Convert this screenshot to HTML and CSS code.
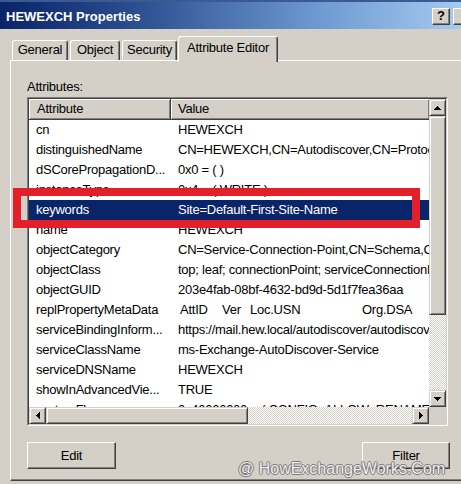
FILE: index.html
```html
<!DOCTYPE html>
<html>
<head>
<meta charset="utf-8">
<link rel="stylesheet" href="styles.css">
</head>
<body>
<div class="window">
  <div class="titlebar">
    <span class="title">HEWEXCH Properties</span>
    <div class="tb-buttons">
      <span class="tb-btn">?</span>
      <span class="tb-btn"></span>
    </div>
  </div>
  <div class="main">
    <div class="tabs">
      <div class="tab w-general">General</div>
      <div class="tab w-object">Object</div>
      <div class="tab w-security">Security</div>
      <div class="tab active w-attr">Attribute Editor</div>
    </div>
    <div class="panel">
      <div class="label">Attributes:</div>
      <div class="listbox">
        <div class="listbox-inner">
          <div class="list-main">
            <div class="header">
              <div class="hcell h-attr">Attribute</div>
              <div class="hcell h-val">Value</div>
            </div>
            <div class="row"><span class="c-attr">cn</span><span class="c-val">HEWEXCH</span></div>
            <div class="row"><span class="c-attr">distinguishedName</span><span class="c-val">CN=HEWEXCH,CN=Autodiscover,CN=Protocols,CN=HEWEXCH,CN=Servers</span></div>
            <div class="row"><span class="c-attr">dSCorePropagationD...</span><span class="c-val">0x0 = ( )</span></div>
            <div class="row"><span class="c-attr">instanceType</span><span class="c-val">0x4 = ( WRITE )</span></div>
            <div class="row selected"><span class="c-attr">keywords</span><span class="c-val">Site=Default-First-Site-Name</span></div>
            <div class="row"><span class="c-attr">name</span><span class="c-val">HEWEXCH</span></div>
            <div class="row"><span class="c-attr">objectCategory</span><span class="c-val">CN=Service-Connection-Point,CN=Schema,CN=Configuration</span></div>
            <div class="row"><span class="c-attr">objectClass</span><span class="c-val">top; leaf; connectionPoint; serviceConnectionPoint</span></div>
            <div class="row"><span class="c-attr">objectGUID</span><span class="c-val">203e4fab-08bf-4632-bd9d-5d1f7fea36aa</span></div>
            <div class="row"><span class="c-attr">replPropertyMetaData</span><span class="c-val meta"><span class="m1">AttID</span><span class="m2">Ver</span><span class="m3">Loc.USN</span><span>Org.DSA</span></span></div>
            <div class="row"><span class="c-attr">serviceBindingInform...</span><span class="c-val">https://mail.hew.local/autodiscover/autodiscover.xml</span></div>
            <div class="row"><span class="c-attr">serviceClassName</span><span class="c-val">ms-Exchange-AutoDiscover-Service</span></div>
            <div class="row"><span class="c-attr">serviceDNSName</span><span class="c-val">HEWEXCH</span></div>
            <div class="row"><span class="c-attr">showInAdvancedVie...</span><span class="c-val">TRUE</span></div>
            <div class="row"><span class="c-attr">systemFlags</span><span class="c-val">0x40000000 = ( CONFIG_ALLOW_RENAME )</span></div>
          </div>
          <div class="vscroll">
            <div class="sbtn"><svg width="7" height="4" viewBox="0 0 7 4"><path d="M3 0h1v1h1v1h1v1h1v1H0V3h1V2h1V1h1z"/></svg></div>
            <div class="vthumb"></div>
            <div class="track"></div>
            <div class="sbtn"><svg width="7" height="4" viewBox="0 0 7 4"><path d="M0 0h7v1H6v1H5v1H4v1H3V3H2V2H1V1H0z"/></svg></div>
          </div>
          <div class="hscroll">
            <div class="sbtn"><svg width="4" height="7" viewBox="0 0 4 7"><path d="M3 0h1v7H3V6H2V5H1V4H0V3h1V2h1V1h1z"/></svg></div>
            <div class="hthumb"></div>
            <div class="track"></div>
            <div class="sbtn"><svg width="4" height="7" viewBox="0 0 4 7"><path d="M0 0h1v1h1v1h1v1h1v1H3v1H2v1H1v1H0z"/></svg></div>
          </div>
          <div class="corner"></div>
        </div>
      </div>
      <div class="buttons">
        <div class="btn btn-edit">Edit</div>
        <div class="btn btn-filter">Filter</div>
      </div>
    </div>
  </div>
  <div class="redbox"></div>
  <div class="watermark">@ HowExchangeWorks.Com</div>
</div>
</body>
</html>
```
FILE: styles.css
```css
* { box-sizing: border-box; }
html, body { margin: 0; padding: 0; }
body {
  background: #d4d0c8;
  font-family: "Liberation Sans", Arial, sans-serif;
  font-size: 13px;
  letter-spacing: -0.25px;
  color: #000;
}
.window {
  position: relative;
  width: 461px;
  height: 484px;
  overflow: hidden;
  background: #d4d0c8;
  display: flex;
  flex-direction: column;
}
.titlebar {
  flex-shrink: 0;
  height: 29px;
  padding: 3px 0 0 6px;
  display: flex;
  align-items: center;
  justify-content: space-between;
  background: linear-gradient(to right, #0a246a 0%, #2c4f8f 30%, #6f9bd3 70%, #a6caf0 100%);
  box-shadow: inset 0 2px #3a5a92;
}
.title {
  color: #fff;
  font-weight: bold;
  font-size: 13px;
  letter-spacing: 0;
}
.tb-buttons {
  display: flex;
  gap: 3px;
  margin-right: -10px;
}
.tb-btn {
  width: 18px;
  height: 17px;
  background: #d4d0c8;
  border: 1px solid;
  border-color: #fff #404040 #404040 #fff;
  box-shadow: inset -1px -1px #808080;
  font-weight: bold;
  font-size: 13px;
  line-height: 14px;
  text-align: center;
  letter-spacing: 0;
}
.main {
  flex: 1;
  display: flex;
  flex-direction: column;
  padding: 7px 0 3px 10px;
}
.tabs {
  position: relative;
  z-index: 1;
  height: 24px;
  display: flex;
  align-items: flex-start;
  padding-left: 2px;
}
.tab {
  margin-top: 4px;
  height: 20px;
  margin-right: 2px;
  text-align: center;
  line-height: 18px;
  background: #d4d0c8;
  border-top: 1px solid #fff;
  border-left: 1px solid #fff;
  border-right: 1px solid #404040;
  box-shadow: inset -1px 0 #808080;
  border-radius: 3px 3px 0 0;
}
.tab.active {
  margin-top: 0;
  margin-left: -1px;
  height: 26px;
  line-height: 22px;
}
.w-general { width: 56px; }
.w-object { width: 50px; }
.w-security { width: 55px; }
.w-attr { width: 100px; }
.panel {
  flex: 1;
  border-top: 1px solid #fff;
  border-left: 1px solid #fff;
  border-bottom: 1px solid #404040;
  box-shadow: inset 0 -1px #808080;
  padding: 18px 0 0 16px;
}
.label {
  line-height: 15px;
  height: 15px;
}
.listbox {
  margin-top: 3px;
  width: 421px;
  height: 329px;
  border: 1px solid;
  border-color: #808080 #fff #fff #808080;
}
.listbox-inner {
  height: 100%;
  border: 1px solid;
  border-color: #404040 #d4d0c8 #d4d0c8 #404040;
  background: #fff;
  display: grid;
  grid-template-columns: 1fr 17px;
  grid-template-rows: 1fr 17px;
}
.list-main {
  overflow: hidden;
  min-width: 0;
  min-height: 0;
}
.header {
  display: flex;
  height: 21px;
}
.hcell {
  background: #d4d0c8;
  border-right: 1px solid #404040;
  border-bottom: 1px solid #404040;
  box-shadow: inset 1px 1px #fff, inset -1px -1px #808080;
  line-height: 19px;
}
.h-attr { width: 142px; flex-shrink: 0; padding-left: 8px; }
.h-val { flex: 1; padding-left: 7px; border-right: 0; }
.row {
  display: flex;
  height: 20px;
  line-height: 20px;
  white-space: nowrap;
}
.row.selected {
  background: #0a246a;
  color: #fff;
}
.c-attr {
  width: 142px;
  flex-shrink: 0;
  padding-left: 7px;
}
.c-val { padding-left: 7px; }
.meta { padding-left: 9px; display: flex; }
.m1 { width: 42px; }
.m2 { width: 28px; }
.m3 { width: 112px; }
.sbtn {
  width: 17px;
  height: 17px;
  flex-shrink: 0;
  background: #d4d0c8;
  border: 1px solid;
  border-color: #d4d0c8 #404040 #404040 #d4d0c8;
  box-shadow: inset 1px 1px #fff, inset -1px -1px #808080;
  display: flex;
  align-items: center;
  justify-content: center;
}
.sbtn svg { display: block; fill: #000; }
.vscroll {
  display: flex;
  flex-direction: column;
}
.hscroll {
  display: flex;
}
.vthumb {
  height: 199px;
  flex-shrink: 0;
  background: #d4d0c8;
  border: 1px solid;
  border-color: #d4d0c8 #404040 #404040 #d4d0c8;
  box-shadow: inset 1px 1px #fff, inset -1px -1px #808080;
}
.hthumb {
  width: 202px;
  flex-shrink: 0;
  background: #d4d0c8;
  border: 1px solid;
  border-color: #d4d0c8 #404040 #404040 #d4d0c8;
  box-shadow: inset 1px 1px #fff, inset -1px -1px #808080;
}
.track {
  flex: 1;
  background-color: #fff;
  background-image: conic-gradient(#d4d0c8 25%, #fff 0 50%, #d4d0c8 0 75%, #fff 0);
  background-size: 2px 2px;
}
.corner { background: #d4d0c8; }
.buttons {
  margin-top: 16px;
  width: 423px;
  display: flex;
  justify-content: space-between;
}
.btn {
  height: 27px;
  background: #d4d0c8;
  border: 1px solid;
  border-color: #fff #404040 #404040 #fff;
  box-shadow: inset -1px -1px #808080;
  text-align: center;
  line-height: 25px;
}
.btn-edit { width: 89px; }
.btn-filter { width: 88px; }
.redbox {
  position: absolute;
  left: 13px;
  top: 188px;
  width: 407px;
  height: 40px;
  border: 8px solid #e3202a;
}
.watermark {
  position: absolute;
  left: 238px;
  top: 460px;
  font-size: 16px;
  line-height: 18px;
  letter-spacing: 0;
  color: #efefef;
  text-shadow: 1px 0 #7a7a7a, -1px 0 #7a7a7a, 0 1px #7a7a7a, 0 -1px #7a7a7a;
  white-space: nowrap;
}
```
